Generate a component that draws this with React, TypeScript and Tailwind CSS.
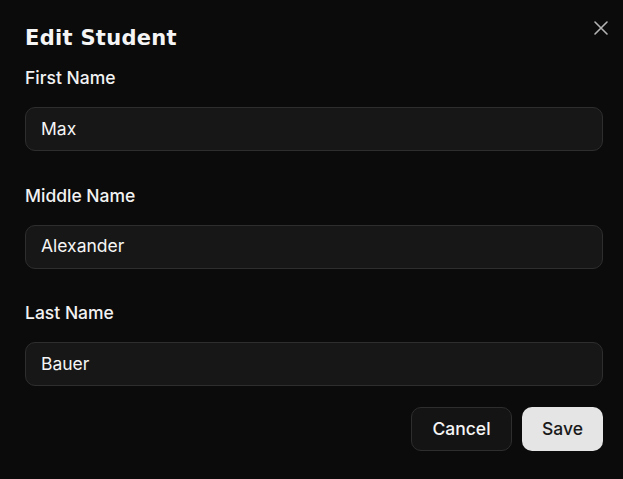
import React from "react";

function Field({ label, value }: { label: string; value: string }) {
  return (
    <div className="flex flex-col">
      <label className="text-[17.5px] leading-6 font-medium text-[#f2f2f2]">{label}</label>
      <div className="mt-[17px] h-[44px] rounded-[10px] border border-[#2e2e2e] bg-[#171717] flex items-center px-[15px] text-[17.5px] text-[#f5f5f5]">
        {value}
      </div>
    </div>
  );
}

export default function App() {
  return (
    <div
      className="w-[623px] h-[479px] bg-[#0b0b0b] relative overflow-hidden"
      style={{ fontFamily: "Inter, 'Liberation Sans', sans-serif" }}
    >
      <button className="absolute right-[14px] top-[20px] w-[16px] h-[16px] flex items-center justify-center text-[#b3b3b3]">
        <svg width="16" height="16" viewBox="0 0 16 16" fill="none" stroke="currentColor" strokeWidth="1.6" strokeLinecap="round">
          <path d="M2 2 L14 14 M14 2 L2 14" />
        </svg>
      </button>
      <div className="pl-[25px] pr-[20px] pt-[24px] flex flex-col">
        <h2
          className="text-[21px] leading-7 font-bold text-[#f5f5f5] tracking-[0.3px]"
          style={{ fontFamily: "'DejaVu Sans', sans-serif" }}
        >
          Edit Student
        </h2>
        <div className="mt-[14px] flex flex-col gap-[32.5px]">
          <Field label="First Name" value="Max" />
          <Field label="Middle Name" value="Alexander" />
          <Field label="Last Name" value="Bauer" />
        </div>
        <div className="mt-[21px] flex justify-end gap-[10px]">
          <button className="h-[44px] w-[101px] rounded-[10px] border border-[#2e2e2e] bg-[#141414] text-[17.5px] font-medium text-[#f5f5f5]">
            Cancel
          </button>
          <button className="h-[44px] w-[81px] rounded-[10px] bg-[#e5e5e5] text-[17.5px] font-medium text-[#1a1a1a]">
            Save
          </button>
        </div>
      </div>
    </div>
  );
}
